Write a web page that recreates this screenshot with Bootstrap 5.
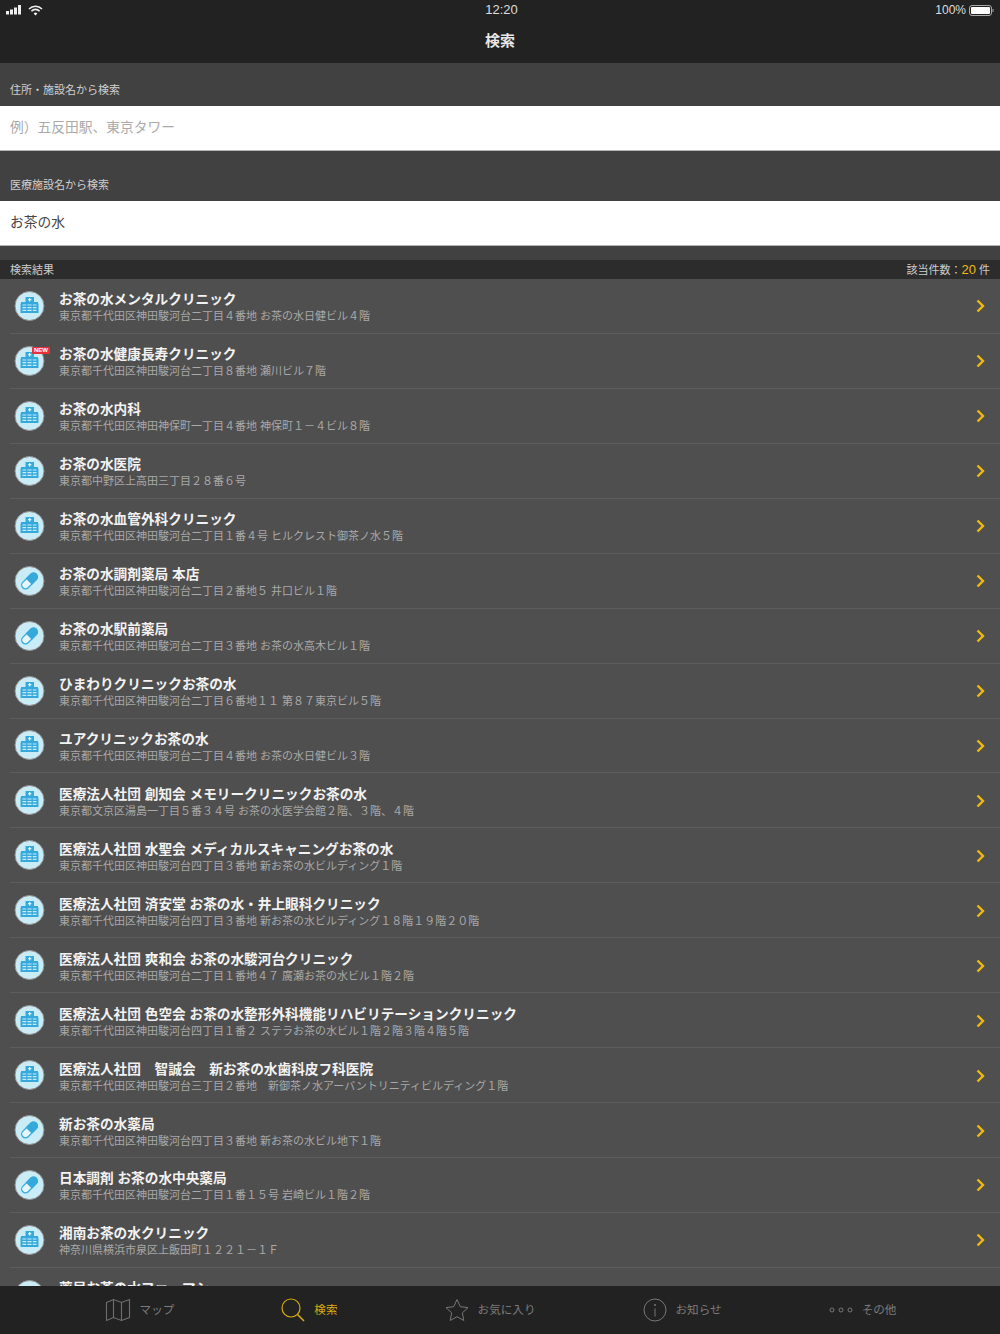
<!DOCTYPE html>
<html lang="ja">
<head>
<meta charset="UTF-8">
<meta name="viewport" content="width=device-width, initial-scale=1.0">
<title>検索</title>
<link href="https://cdn.jsdelivr.net/npm/bootstrap@5.3.3/dist/css/bootstrap.min.css" rel="stylesheet">
<style>
body { font-family: "Liberation Sans", "Noto Sans CJK JP", sans-serif; background: #4f4f4f; }
.screen { height: 1334px; overflow: hidden; }
.status-bar { height: 20px; font-size: 12px; color: #ddd; background: #222; padding: 0 6px; }
.status-bar > div { flex: 1 1 0; }
.status-left { gap: 6px; }
.status-right { gap: 3px; }
.status-time { font-size: 13px; padding-left: 3px; }
.title-bar { height: 43px; background: #222; color: #e8e8e8; font-size: 15px; font-weight: 700; }
.section-label { height: 43px; background: #414141; color: #d0d0d0; font-size: 11px; padding: 0 10px 8px; }
.section-label.next { height: 50px; }
.search-box { height: 45px; background: #fff; padding: 1px 10px 0; font-size: 13.75px; color: #444; border-bottom: 1px solid #b4b4b4; }
.search-box.empty { color: #aaa; }
.spacer { height: 14px; background: #414141; }
.results-bar { height: 19px; background: #2c2c2c; color: #ccc; font-size: 11px; padding: 1px 10px 0; }
.count { color: #f0b90f; font-size: 13px; }
.results { min-height: 0; overflow: hidden; }
.result-row { height: 54.94px; padding-left: 10px; }
.result-inner { height: 100%; border-bottom: 1px solid #5d5d5d; padding-right: 15px; }
.result-icon { width: 40px; height: 40px; margin-right: 9px; position: relative; }
.result-text { min-width: 0; padding-top: 4px; }
.result-title { color: #f2f2f2; font-size: 13.67px; font-weight: 700; line-height: 16px; white-space: nowrap; }
.result-addr { color: #a9a9a9; font-size: 11px; line-height: 14px; margin-top: 1px; white-space: nowrap; }
.result-arrow { margin-top: 1px; }
.new-tag { position: absolute; top: 6px; left: 22px; font: 700 6px/7px "Liberation Sans", sans-serif; color: #fff; background: #e8303a; padding: 0 2px; border-radius: 1px; }
.tab-bar { height: 48px; background: #222; gap: 107px; padding-left: 1px; }
.tab-item { color: #7c7c7c; font-size: 11.6px; gap: 9px; }
.tab-item.active { color: #d8a90e; }
</style>
</head>
<body>
<div class="screen d-flex flex-column">
  <div class="status-bar d-flex align-items-center flex-shrink-0">
    <div class="status-left d-flex align-items-center">
      <svg width="16" height="10" viewBox="0 0 16 10" fill="#eee"><rect x="0" y="6" width="3" height="3.500"/><rect x="4" y="4.500" width="3" height="5"/><rect x="8" y="2.500" width="3" height="7"/><rect x="12" y="0" width="3" height="9.500"/></svg>
      <svg width="15" height="11" viewBox="0 0 15 11" fill="none" stroke="#eee" stroke-width="1.600"><path d="M1 4a9 9 0 0 1 13 0"/><path d="M3.400 6.200a5.600 5.600 0 0 1 8.200 0"/><path d="M7.500 10.500 5.600 8.400a2.700 2.700 0 0 1 3.800 0z" fill="#eee" stroke="none"/></svg>
    </div>
    <div class="status-time text-center">12:20</div>
    <div class="status-right d-flex align-items-center justify-content-end">
      <span>100%</span>
      <svg width="25" height="11" viewBox="0 0 25 11"><rect x=".5" y=".5" width="22" height="10" rx="2.500" fill="none" stroke="#aaa"/><rect x="2" y="2" width="19" height="7" rx="1" fill="#fff"/><rect x="23.500" y="4" width="1" height="3" fill="#aaa"/></svg>
    </div>
  </div>
  <div class="title-bar d-flex align-items-center justify-content-center flex-shrink-0">検索</div>

  <div class="section-label d-flex align-items-end flex-shrink-0">住所・施設名から検索</div>
  <div class="search-box empty d-flex align-items-center flex-shrink-0">例）五反田駅、東京タワー</div>
  <div class="section-label next d-flex align-items-end flex-shrink-0">医療施設名から検索</div>
  <div class="search-box d-flex align-items-center flex-shrink-0">お茶の水</div>
  <div class="spacer flex-shrink-0"></div>

  <div class="results-bar d-flex align-items-center justify-content-between flex-shrink-0">
    <span>検索結果</span>
    <span>該当件数：<span class="count">20</span> 件</span>
  </div>

  <div class="results flex-grow-1" id="results"></div>

  <div class="tab-bar d-flex align-items-center justify-content-center flex-shrink-0">
    <div class="tab-item d-flex align-items-center">
      <svg width="26" height="24" viewBox="0 0 26 24" fill="none" stroke="#6f6f6f" stroke-width="1.100"><path d="M1.500 4.500 8.500 1.500 16.500 4.500 24.500 1.500V19.500L16.500 22.500 8.500 19.500 1.500 22.500Z"/><path d="M8.500 1.500V19.500M16.500 4.500V22.500"/></svg>
      <span>マップ</span>
    </div>
    <div class="tab-item active d-flex align-items-center">
      <svg width="24" height="24" viewBox="0 0 24 24" fill="none" stroke="#d8a90e" stroke-width="1.200"><circle cx="10" cy="10" r="9"/><path d="M16.500 16.500 23 23" stroke-width="1.600"/></svg>
      <span>検索</span>
    </div>
    <div class="tab-item d-flex align-items-center">
      <svg width="24" height="24" viewBox="0 0 24 24" fill="none" stroke="#777" stroke-width="1"><path d="M12 1.500 15.300 8.700 23 9.600 17.300 14.900 18.800 22.500 12 18.700 5.200 22.500 6.700 14.900 1 9.600 8.700 8.700Z"/></svg>
      <span>お気に入り</span>
    </div>
    <div class="tab-item d-flex align-items-center">
      <svg width="24" height="24" viewBox="0 0 24 24" fill="none" stroke="#777" stroke-width="1"><circle cx="12" cy="12" r="11"/><path d="M12 10.500V18.500"/><circle cx="12" cy="7" r=".6" fill="#777"/></svg>
      <span>お知らせ</span>
    </div>
    <div class="tab-item d-flex align-items-center">
      <svg width="24" height="6" viewBox="0 0 24 6" fill="none" stroke="#777" stroke-width="1"><circle cx="3" cy="3" r="2"/><circle cx="12" cy="3" r="2"/><circle cx="21" cy="3" r="2"/></svg>
      <span>その他</span>
    </div>
  </div>
</div>

<script>
var disc = '<circle cx="19.500" cy="20" r="14.500" fill="#c9ecf7" stroke="#8f8f8f" stroke-width="1"/>';
var clinic = disc +
  '<path d="M15.500 11h8.500v5h4v1.500h.5V27h-18V17.500h.5V16h4.500z" fill="#36a9dc"/>' +
  '<path d="M19.700 12v3.400M18 13.700h3.400" stroke="#fff" stroke-width="1.100"/>' +
  '<path d="M12.500 19h14M12.500 21.700h14M12.500 24.400h14" stroke="#c9ecf7" stroke-width="1.200"/>' +
  '<path d="M16.800 18v7.500M22.200 18v7.500" stroke="#36a9dc" stroke-width="1.200"/>';
var pill = disc +
  '<g transform="rotate(-45 19.500 20)"><rect x="10" y="16.200" width="19" height="7.600" rx="3.800" fill="#e6f7fc" stroke="#36a9dc" stroke-width="1.300"/>' +
  '<path d="M18.500 15.550h6.700a4.450 4.450 0 0 1 0 8.900h-6.700z" fill="#36a9dc"/></g>';

var rows = [
  ['c','お茶の水メンタルクリニック','東京都千代田区神田駿河台二丁目４番地 お茶の水日健ビル４階'],
  ['c','お茶の水健康長寿クリニック','東京都千代田区神田駿河台二丁目８番地 瀬川ビル７階',1],
  ['c','お茶の水内科','東京都千代田区神田神保町一丁目４番地 神保町１－４ビル８階'],
  ['c','お茶の水医院','東京都中野区上高田三丁目２８番６号'],
  ['c','お茶の水血管外科クリニック','東京都千代田区神田駿河台二丁目１番４号 ヒルクレスト御茶ノ水５階'],
  ['p','お茶の水調剤薬局 本店','東京都千代田区神田駿河台二丁目２番地５ 井口ビル１階'],
  ['p','お茶の水駅前薬局','東京都千代田区神田駿河台二丁目３番地 お茶の水高木ビル１階'],
  ['c','ひまわりクリニックお茶の水','東京都千代田区神田駿河台二丁目６番地１１ 第８７東京ビル５階'],
  ['c','ユアクリニックお茶の水','東京都千代田区神田駿河台二丁目４番地 お茶の水日健ビル３階'],
  ['c','医療法人社団 創知会 メモリークリニックお茶の水','東京都文京区湯島一丁目５番３４号 お茶の水医学会館２階、３階、４階'],
  ['c','医療法人社団 水聖会 メディカルスキャニングお茶の水','東京都千代田区神田駿河台四丁目３番地 新お茶の水ビルディング１階'],
  ['c','医療法人社団 済安堂 お茶の水・井上眼科クリニック','東京都千代田区神田駿河台四丁目３番地 新お茶の水ビルディング１８階１９階２０階'],
  ['c','医療法人社団 爽和会 お茶の水駿河台クリニック','東京都千代田区神田駿河台二丁目１番地４７ 廣瀬お茶の水ビル１階２階'],
  ['c','医療法人社団 色空会 お茶の水整形外科機能リハビリテーションクリニック','東京都千代田区神田駿河台四丁目１番２ ステラお茶の水ビル１階２階３階４階５階'],
  ['c','医療法人社団　智誠会　新お茶の水歯科皮フ科医院','東京都千代田区神田駿河台三丁目２番地　新御茶ノ水アーバントリニティビルディング１階'],
  ['p','新お茶の水薬局','東京都千代田区神田駿河台四丁目３番地 新お茶の水ビル地下１階'],
  ['p','日本調剤 お茶の水中央薬局','東京都千代田区神田駿河台二丁目１番１５号 岩崎ビル１階２階'],
  ['c','湘南お茶の水クリニック','神奈川県横浜市泉区上飯田町１２２１－１Ｆ'],
  ['c','薬局お茶の水ファーマシ','&nbsp;']
];

document.getElementById('results').innerHTML = rows.map(function (r) {
  return '<div class="result-row"><div class="result-inner d-flex align-items-center">' +
    '<div class="result-icon flex-shrink-0"><svg width="40" height="40" viewBox="0 0 40 40">' + (r[0] == 'c' ? clinic : pill) + '</svg>' +
    (r[3] ? '<span class="new-tag">NEW</span>' : '') + '</div>' +
    '<div class="result-text flex-grow-1"><div class="result-title">' + r[1] + '</div><div class="result-addr">' + r[2] + '</div></div>' +
    '<svg width="9" height="14" viewBox="0 0 9 14" fill="none" stroke="#f0b90f" stroke-width="2.400" class="result-arrow flex-shrink-0"><path d="M1.500 1.500 7 7 1.500 12.500"/></svg>' +
    '</div></div>';
}).join('');
</script>
<script src="https://cdn.jsdelivr.net/npm/bootstrap@5.3.3/dist/js/bootstrap.bundle.min.js"></script>
</body>
</html>
